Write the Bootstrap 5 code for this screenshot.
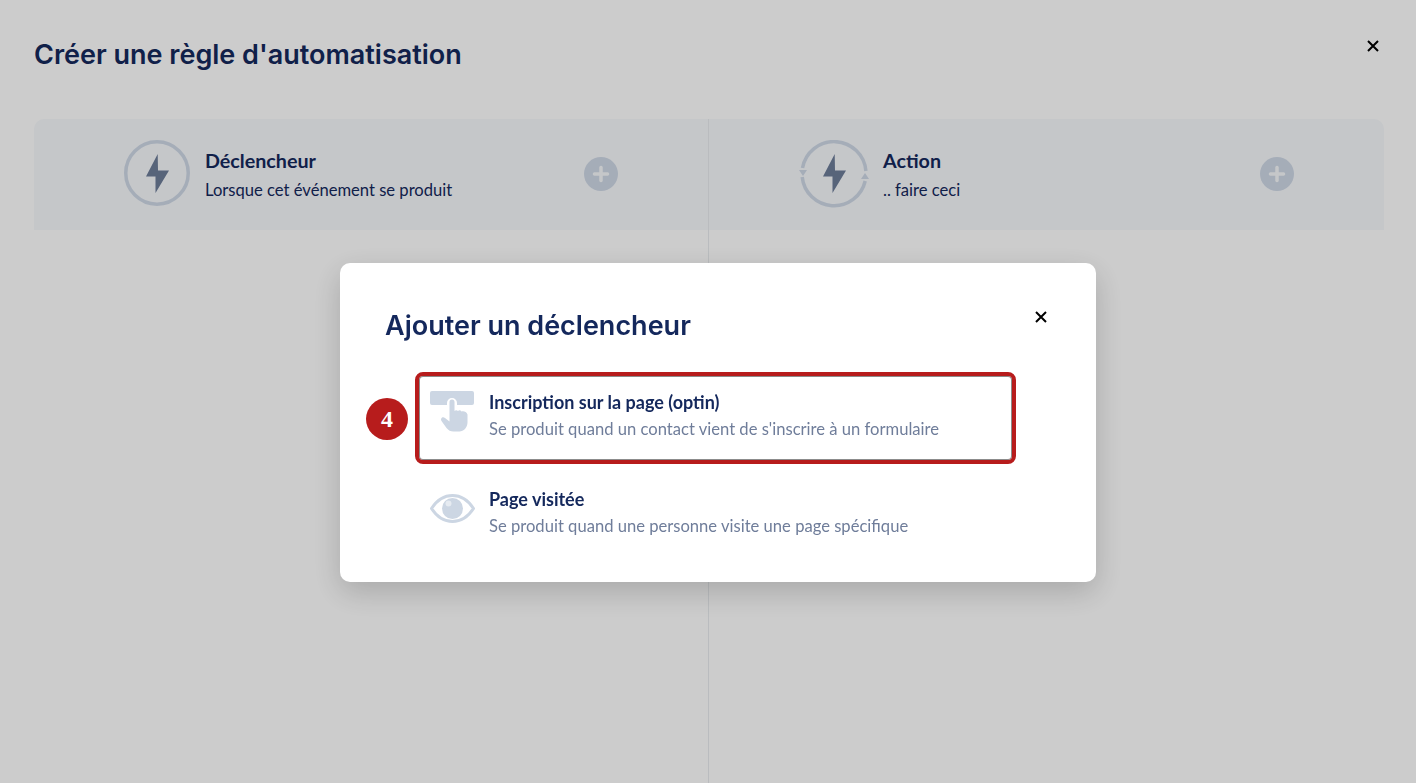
<!DOCTYPE html>
<html lang="fr">
<head>
    <meta charset="UTF-8">
    <meta name="viewport" content="width=device-width, initial-scale=1.0">
    <title>Créer une règle d'automatisation</title>
    <link href="https://cdn.jsdelivr.net/npm/bootstrap@5.3.3/dist/css/bootstrap.min.css" rel="stylesheet">
    <style>
        html, body { height: 100%; }
        body { background: #fff; overflow: hidden; font-family: Lato, sans-serif; color: #14285c; }
        .page-wrap { height: 783px; padding: 39px 32px 0 34px; display: flex; flex-direction: column; }
        .page-title { font-family: Inter, sans-serif; font-weight: 600; font-size: 27px; line-height: 32px; color: #14285c; margin: 0; }
        .x-btn { background: none; border: 0; padding: 0; line-height: 0; color: #000; }
        .page-head { height: 80px; }
        .page-close { margin: 1px 5px 0 0; }
        .steps { height: 111px; background: #f7f9fc; border-radius: 10px 10px 0 0; flex-shrink: 0; }
        .step-col { position: relative; }
        .step-left { width: 674px; padding-left: 90px; }
        .step-right { flex: 1; padding-left: 89px; border-left: 1px solid #e9ecef; }
        .step-name { font-weight: 700; font-size: 19.7px; line-height: 24px; color: #14285c; }
        .step-sub { font-size: 16.6px; line-height: 22px; margin-top: 6px; color: #14285c; }
        .bolt-ring { margin: 0 15px 3px 0; flex-shrink: 0; }
        .bolt-cycle { margin-right: 13px; flex-shrink: 0; }
        .step-plus { position: absolute; top: 38px; width: 34px; height: 34px; }
        .step-left .step-plus { left: 550px; }
        .step-right .step-plus { left: 551px; }
        .split-rest { flex: 1; display: flex; }
        .split-half { width: 676px; margin-left: auto; border-left: 1px solid #e9ecef; }
        .dim-layer { position: fixed; inset: 0; background: rgba(0, 0, 0, .2); padding: 263px 0 0 340px; }
        .add-box { width: 756px; height: 319px; background: #fff; border-radius: 10px; box-shadow: 0 10px 30px rgba(0, 0, 0, .18); position: relative; padding: 46px 0 0 45px; }
        .add-title { font-family: Inter, sans-serif; font-weight: 600; font-size: 27px; line-height: 34px; color: #14285c; margin: 0; }
        .add-close { position: absolute; top: 48px; left: 695px; }
        .pick-list { margin-top: 29px; margin-left: 30px; width: 601px; }
        .pick-row { display: flex; position: relative; }
        .pick-row.is-marked { height: 92px; border: 4px solid #b71c1c; border-radius: 8px; box-shadow: inset 0 0 0 1px #8c8c8c; padding: 15px 0 0 11px; }
        .pick-row.is-second { height: 98px; padding: 24px 0 0 15px; }
        .hand-icon { width: 44px; height: 42px; flex-shrink: 0; margin-right: 15px; }
        .eye-icon { width: 45px; height: 29px; flex-shrink: 0; margin: 6px 14px 0 0; }
        .pick-name { font-weight: 700; font-size: 18px; line-height: 22px; color: #14285c; }
        .pick-sub { font-size: 16.6px; line-height: 20px; margin-top: 6px; color: #6f7d9a; }
        .num-badge { position: absolute; left: -53px; top: 22px; width: 42px; height: 42px; border-radius: 50%; background: #b71c1c; color: #fff; font-family: "Liberation Serif", serif; font-weight: 700; font-size: 24px; }
    </style>
</head>
<body>
    <div class="page-wrap">
        <div class="page-head d-flex justify-content-between align-items-start">
            <h1 class="page-title">Créer une règle d'automatisation</h1>
            <button class="x-btn page-close" type="button" aria-label="Fermer">
                <svg width="12" height="12" viewBox="0 0 12 12"><path d="M1 1l10 10M11 1L1 11" stroke="currentColor" stroke-width="2"/></svg>
            </button>
        </div>
        <div class="steps d-flex">
            <div class="step-col step-left d-flex align-items-center">
                <svg class="bolt-ring" width="66" height="66" viewBox="0 0 66 66">
                    <circle cx="33" cy="33" r="31.25" fill="none" stroke="#cfd9e7" stroke-width="3.5"/>
                    <path d="M33.700 14L22 36.500h9.500V53L45 30.500H34z" fill="#6d7d99"/>
                </svg>
                <div>
                    <div class="step-name">Déclencheur</div>
                    <div class="step-sub">Lorsque cet événement se produit</div>
                </div>
                <svg class="step-plus" viewBox="0 0 34 34"><circle cx="17" cy="17" r="17" fill="#cfd9e7"/><path d="M17 10.500v13M10.500 17h13" stroke="#f7f9fc" stroke-width="3.500" stroke-linecap="round"/></svg>
            </div>
            <div class="step-col step-right d-flex align-items-center">
                <svg class="bolt-cycle" width="72" height="69" viewBox="0 0 72 69">
                    <path d="M4.500 28A32 32 0 0 1 67.900 31M4.200 37A32 32 0 0 0 67.200 41" fill="none" stroke="#cfd9e7" stroke-width="3.500"/>
                    <path d="M1 30h8l-4 6zM63 39h8l-4-6z" fill="#cfd9e7"/>
                    <path d="M36.700 14L25 36.500h9.500V53L48 30.500H37z" fill="#6d7d99"/>
                </svg>
                <div>
                    <div class="step-name">Action</div>
                    <div class="step-sub">.. faire ceci</div>
                </div>
                <svg class="step-plus" viewBox="0 0 34 34"><circle cx="17" cy="17" r="17" fill="#cfd9e7"/><path d="M17 10.500v13M10.500 17h13" stroke="#f7f9fc" stroke-width="3.500" stroke-linecap="round"/></svg>
            </div>
        </div>
        <div class="split-rest"><div class="split-half"></div></div>
    </div>

    <div class="dim-layer">
        <div class="add-box">
            <h2 class="add-title">Ajouter un déclencheur</h2>
            <button class="x-btn add-close" type="button" aria-label="Fermer">
                <svg width="12" height="12" viewBox="0 0 12 12"><path d="M1 1l10 10M11 1L1 11" stroke="currentColor" stroke-width="2"/></svg>
            </button>
            <div class="pick-list">
                <div class="pick-row is-marked">
                    <span class="num-badge d-flex align-items-center justify-content-center">4</span>
                    <svg class="hand-icon" viewBox="0 0 44 42">
                        <path d="M2 0h40a2 2 0 0 1 2 2v10a2 2 0 0 1-2 2H27v-2a5 5 0 0 0-10 0v2H2a2 2 0 0 1-2-2V2a2 2 0 0 1 2-2z" fill="#ccd6e3"/>
                        <path d="M19.500 11a2.500 2.500 0 0 1 5 0v9c1-1 2.500-1 3.500 0 1-1 2.500-1 3.500.5 1.500-.5 5-.5 6 3v8c0 5-4 9-8 9h-6c-3 0-5-1-7-3.500l-5-7c-1.500-2.500 1-5 3.500-3l4.500 3.500z" fill="#ccd6e3"/>
                    </svg>
                    <div>
                        <div class="pick-name">Inscription sur la page (optin)</div>
                        <div class="pick-sub">Se produit quand un contact vient de s'inscrire à un formulaire</div>
                    </div>
                </div>
                <div class="pick-row is-second">
                    <svg class="eye-icon" viewBox="0 0 45 29">
                        <path d="M1.500 14.500C7 6 14 1.500 22.500 1.500S38 6 43.500 14.500C38 23 31 27.500 22.500 27.500S7 23 1.500 14.500z" fill="none" stroke="#ccd6e3" stroke-width="3"/>
                        <circle cx="22.500" cy="14.500" r="10.500" fill="#ccd6e3"/>
                        <circle cx="18.500" cy="9.500" r="3" fill="#fff" opacity=".5"/>
                    </svg>
                    <div>
                        <div class="pick-name">Page visitée</div>
                        <div class="pick-sub">Se produit quand une personne visite une page spécifique</div>
                    </div>
                </div>
            </div>
        </div>
    </div>
    <script src="https://cdn.jsdelivr.net/npm/bootstrap@5.3.3/dist/js/bootstrap.bundle.min.js"></script>
</body>
</html>
